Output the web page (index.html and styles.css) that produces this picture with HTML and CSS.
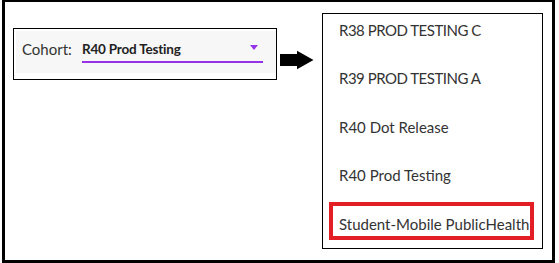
FILE: index.html
```html
<!DOCTYPE html>
<html lang="en">
<head>
  <meta charset="UTF-8" />
  <title>Cohort dropdown</title>
  <link rel="stylesheet" href="styles.css">
</head>
<body>
  <div class="frame">
    <div class="select-box">
      <div class="select-inner">
        <span class="label">Cohort:</span>
        <div class="value">
          <span>R40 Prod Testing</span>
          <span class="caret"></span>
        </div>
      </div>
    </div>

    <svg class="arrow" width="34" height="20" viewBox="0 0 34 20">
      <polygon points="0,4 17,4 17,0.7 33.5,10 17,19.3 17,16 0,16" fill="#000"/>
    </svg>

    <div class="options">
      <div class="option caps">R38 PROD TESTING C</div>
      <div class="option caps">R39 PROD TESTING A</div>
      <div class="option">R40 Dot Release</div>
      <div class="option">R40 Prod Testing</div>
      <div class="option highlight">Student-Mobile PublicHealth</div>
    </div>
  </div>
</body>
</html>
```

FILE: styles.css
```css
body {
  margin: 0;
  font-family: Lato, "Liberation Sans", sans-serif;
  color: #333;
  background: #fff;
}
.frame {
  box-sizing: border-box;
  width: 553px;
  height: 263px;
  margin-left: 2px;
  border: 3px solid #000;
  border-top-width: 2px;
  padding: 11px 0 0 8px;
  display: flex;
  align-items: flex-start;
}
.select-box {
  box-sizing: border-box;
  width: 264px;
  height: 52px;
  margin-top: 15px;
  border: 1px solid #000;
  padding: 2px 0 6px 2px;
}
.select-inner {
  height: 42px;
  background: #f7f7f7;
  display: flex;
  align-items: flex-start;
  padding-left: 6px;
}
.label {
  width: 60px;
  font-size: 15px;
  line-height: 24px;
  margin-top: 6px;
  color: #333;
}
.value {
  box-sizing: border-box;
  width: 181px;
  height: 26px;
  margin-top: 6px;
  border-bottom: 2px solid #9633e6;
  display: flex;
  align-items: center;
  justify-content: space-between;
  font-weight: bold;
  font-size: 13.5px;
  line-height: 24px;
  letter-spacing: -0.2px;
  color: #222;
}
.caret {
  width: 0;
  height: 0;
  margin-right: 5px;
  margin-bottom: 4px;
  border-left: 4px solid transparent;
  border-right: 4px solid transparent;
  border-top: 5px solid #9633e6;
}
.arrow {
  display: block;
  margin: 37px 0 0 3px;
}
.options {
  box-sizing: border-box;
  width: 221px;
  height: 236px;
  margin-left: 8px;
  border: 1px solid #000;
  padding: 7px 0 0 16px;
}
.option {
  font-size: 15px;
  line-height: 18px;
  margin-bottom: 30.4px;
}
.caps {
  letter-spacing: -0.5px;
}
.highlight {
  box-sizing: border-box;
  width: 205px;
  margin: -12.5px 0 0 -10px;
  border: 4px solid #e31e24;
  padding: 8.9px 0 3.1px 6px;
}
```
